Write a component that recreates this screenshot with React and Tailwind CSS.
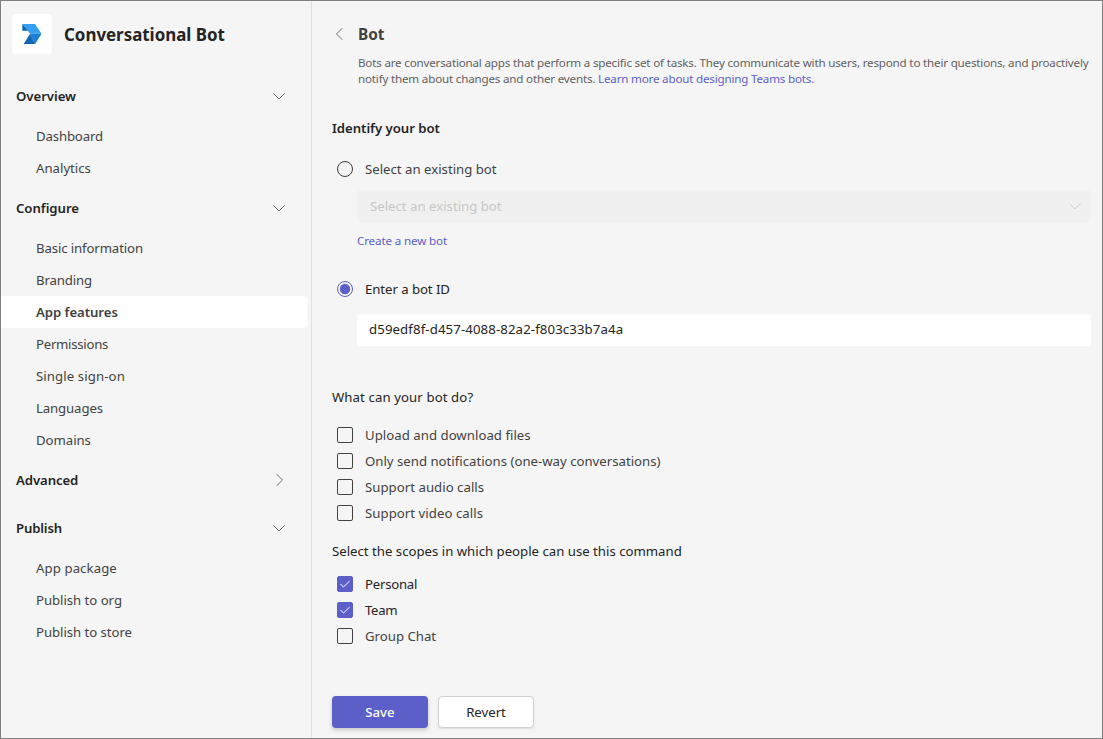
import React from "react";

const NAV = [
  {
    label: "Overview", tracking: "tracking-[-0.05px]", open: true,
    items: [
      { label: "Dashboard", tracking: "tracking-[-0.15px]" },
      { label: "Analytics" },
    ],
  },
  {
    label: "Configure", tracking: "tracking-[-0.05px]", open: true,
    items: [
      { label: "Basic information", tracking: "tracking-[-0.12px]" },
      { label: "Branding", tracking: "tracking-[-0.14px]" },
      { label: "App features", tracking: "tracking-[-0.06px]", active: true },
      { label: "Permissions", tracking: "tracking-[-0.27px]" },
      { label: "Single sign-on", tracking: "tracking-[0.1px]" },
      { label: "Languages", tracking: "tracking-[-0.12px]" },
      { label: "Domains", tracking: "tracking-[-0.05px]" },
    ],
  },
  { label: "Advanced", tracking: "tracking-[-0.1px]", open: false, items: [] },
  {
    label: "Publish", tracking: "tracking-[-0.17px]", open: true,
    items: [
      { label: "App package", tracking: "tracking-[0.09px]" },
      { label: "Publish to org", tracking: "tracking-[-0.04px]" },
      { label: "Publish to store", tracking: "tracking-[-0.05px]" },
    ],
  },
];

const ABILITIES = [
  { label: "Upload and download files", tracking: "tracking-[0.03px]" },
  { label: "Only send notifications (one-way conversations)" },
  { label: "Support audio calls", tracking: "tracking-[0.03px]" },
  { label: "Support video calls", tracking: "tracking-[0.05px]" },
];

const SCOPES = [
  { label: "Personal", tracking: "tracking-[-0.24px]", checked: true },
  { label: "Team", tracking: "tracking-[-0.35px]", checked: true },
  { label: "Group Chat" },
];

function Chevron({ d = "M2.5 5.5 8 11l5.5-5.5", className }) {
  return (
    <svg viewBox="0 0 16 16" className={`size-4 shrink-0 ${className}`} fill="none" stroke="currentColor" strokeWidth="1" strokeLinecap="round" strokeLinejoin="round">
      <path d={d} />
    </svg>
  );
}

function Logo() {
  return (
    <div className="flex size-10 items-center justify-center rounded bg-white">
      <svg viewBox="0 0 20 20" className="size-5">
        <path d="M.3 0H13l6.500 9.800H8Z" fill="#35a0f2" />
        <path d="M.3 0l5.700 6.800H.3Z" fill="#0e64ac" />
        <path d="M8 9.800h11.500L13.200 20Z" fill="#1a7fd6" />
        <path d="M8 9.800 13.200 20H1.600Z" fill="#0f66b2" />
      </svg>
    </div>
  );
}

function Radio({ label, checked, tracking = "" }) {
  return (
    <label className="flex h-8 items-center gap-3 pl-[5px]">
      <svg viewBox="0 0 16 16" className={`size-4 shrink-0 ${checked ? "text-[#5b5fc7]" : "text-[#3a3a3a]"}`}>
        <circle cx="8" cy="8" r="7.500" fill="none" stroke="currentColor" />
        {checked && <circle cx="8" cy="8" r="5.200" fill="currentColor" />}
      </svg>
      <span className={`${tracking} ${checked ? "text-[#242424]" : "text-[#424242]"}`}>{label}</span>
    </label>
  );
}

function Check({ label, checked, tracking = "" }) {
  return (
    <label className="flex h-[26px] items-center gap-3 pl-[5px]">
      <span className={`flex size-4 shrink-0 items-center justify-center rounded-[2px] border ${checked ? "border-[#5b5fc7] bg-[#5b5fc7]" : "border-[#424242]"}`}>
        {checked && (
          <svg viewBox="0 0 14 14" className="size-3.5" fill="none" stroke="white" strokeWidth="1" strokeLinecap="round" strokeLinejoin="round">
            <path d="M2.700 7.200 5.500 10l5.900-5.700" />
          </svg>
        )}
      </span>
      <span className={`${tracking} ${checked ? "text-[#242424]" : "text-[#424242]"}`}>{label}</span>
    </label>
  );
}

export default function App() {
  return (
    <div className="flex h-[739px] w-[1103px] overflow-hidden border border-[#808080] bg-[#f5f5f5] font-['Noto_Sans',sans-serif] text-[13.200px] leading-5 text-[#242424]">
      <aside className="w-[311px] shrink-0 border-r border-[#e0e0e0] pr-1">
        <header className="flex items-center gap-3 pt-[13px] pl-[11px]">
          <Logo />
          <h1 className="pt-0.5 text-[16.900px] font-bold leading-6">Conversational Bot</h1>
        </header>
        <nav className="pt-[26px]">
          {NAV.map((group) => (
            <section key={group.label}>
              <div className="flex h-8 items-center justify-between pr-5 pl-[15px] font-semibold">
                <span className={group.tracking}>{group.label}</span>
                <Chevron className="text-[#707070]" d={group.open ? undefined : "M6 2.500 11.500 8 6 13.500"} />
              </div>
              <ul className="py-2">
                {group.items.map((item) => (
                  <li key={item.label} className={`flex h-8 items-center rounded-r pl-[35px] text-[#424242] ${item.active ? "bg-white font-semibold" : ""} ${item.tracking ?? ""}`}>
                    {item.label}
                  </li>
                ))}
              </ul>
            </section>
          ))}
        </nav>
      </aside>

      <main className="flex-1 pr-[11px] pl-5">
        <div className="mt-[23px] flex h-5 items-center gap-[10px]">
          <Chevron className="text-[#707070]" d="M10 2.500 4.500 8l5.500 5.500" />
          <h2 className="pt-0.5 text-[15.400px] font-bold text-[#424242]">Bot</h2>
        </div>
        <p className="mt-[11px] pl-[26px] text-[11.600px] leading-4 tracking-[-0.18px] whitespace-nowrap text-[#616161]">
          Bots are conversational apps that perform a specific set of tasks. They communicate with users, respond to their questions, and proactively
          <br />
          notify them about changes and other events.{" "}
          <a className="text-[#5b5fc7]">Learn more about designing Teams bots.</a>
        </p>

        <h3 className="mt-[31px] font-semibold tracking-[-0.04px]">Identify your bot</h3>
        <div className="mt-[15px]">
          <Radio label="Select an existing bot" />
          <div className="mt-[5px] ml-[25px] flex h-8 items-center justify-between rounded bg-[#f0f0f0] pr-2 pl-[13px] text-[#c7c7c7]">
            Select an existing bot
            <Chevron className="text-[#d1d1d1]" />
          </div>
          <a className="mt-[11px] ml-[25px] block text-[11.600px] leading-4 tracking-[-0.13px] text-[#5b5fc7]">Create a new bot</a>
        </div>
        <div className="mt-[24px]">
          <Radio label="Enter a bot ID" checked tracking="tracking-[-0.06px]" />
          <div className="mt-[9px] ml-[25px] flex h-8 items-center rounded bg-white pb-0.5 pl-3 tracking-[0.12px]">
            d59edf8f-d457-4088-82a2-f803c33b7a4a
          </div>
        </div>

        <p className="mt-[41px] tracking-[0.1px]">What can your bot do?</p>
        <div className="mt-[15px]">
          {ABILITIES.map((option) => <Check key={option.label} {...option} />)}
        </div>

        <p className="mt-[15px]">Select the scopes in which people can use this command</p>
        <div className="mt-[10px]">
          {SCOPES.map((option) => <Check key={option.label} {...option} />)}
        </div>

        <div className="mt-[47px] flex gap-[10px]">
          <button className="h-8 w-24 rounded bg-[#5b5fc7] font-medium text-white shadow-[0_2px_4px_rgba(0,0,0,0.2)]">Save</button>
          <button className="h-8 w-24 rounded border border-[#d1d1d1] bg-white shadow-[0_1px_2px_rgba(0,0,0,0.1)]">Revert</button>
        </div>
      </main>
    </div>
  );
}
